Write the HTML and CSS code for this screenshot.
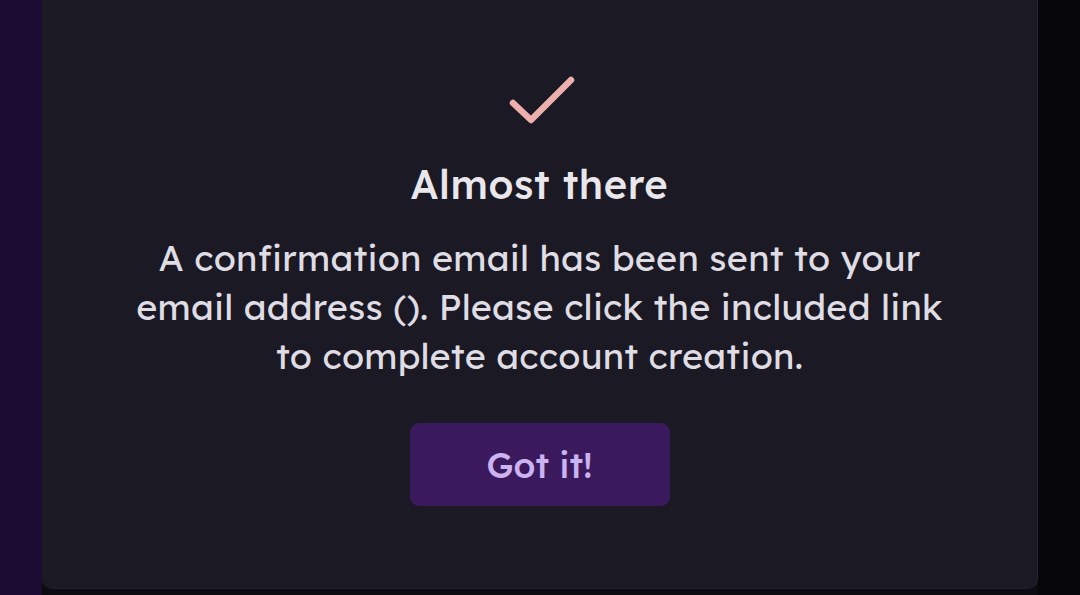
FILE: index.html
```html
<!DOCTYPE html>
<html lang="en">
<head>
<meta charset="utf-8">
<title>Almost there</title>
<link rel="stylesheet" href="styles.css">
</head>
<body>
<div class="page">
  <aside class="rail"></aside>
  <main class="main">
    <section class="card">
      <svg class="check" width="70" height="52" viewBox="0 0 70 52" aria-hidden="true">
        <path d="M5 28 L23 45 L63 5" fill="none" stroke="#eeb0ad" stroke-width="6.5" stroke-linecap="round" stroke-linejoin="round"/>
      </svg>
      <h1 class="title">Almost there</h1>
      <p class="text">A confirmation email has been sent to your email address (). Please click the included link to complete account creation.</p>
      <button class="btn" type="button">Got it!</button>
    </section>
  </main>
  <div class="edge"></div>
</div>
</body>
</html>
```
FILE: styles.css
```css
html, body {
  margin: 0;
  padding: 0;
  height: 100%;
}
body {
  background: #07070b;
  font-family: "Lexend", "Open Sans", "Noto Sans", sans-serif;
  overflow: hidden;
}
.page {
  display: flex;
  height: 595px;
}
.rail {
  width: 42px;
  flex: none;
  background: #1c0b32;
}
.main {
  flex: 1;
  display: flex;
  flex-direction: column;
  background: #0c0b11;
  padding-bottom: 6px;
}
.edge {
  width: 42px;
  flex: none;
  background: #07070b;
}
.card {
  flex: 1;
  background: #1a1924;
  border-right: 1px solid #25242f;
  border-bottom: 1px solid #201f2a;
  border-radius: 0 0 10px 10px;
  display: flex;
  flex-direction: column;
  align-items: center;
  padding-top: 75px;
  box-sizing: border-box;
}
.check {
  display: block;
  margin-left: 6px;
}
.title {
  margin: 0;
  margin-top: 32px;
  font-size: 40px;
  font-weight: 500;
  line-height: 50px;
  letter-spacing: 0.6px;
  color: #e9e7ec;
}
.text {
  margin: 24px 0 0;
  width: 830px;
  text-align: center;
  font-size: 36px;
  line-height: 49px;
  letter-spacing: 0.22px;
  color: #dfdce3;
}
.btn {
  margin-top: 43px;
  width: 260px;
  height: 83px;
  border: none;
  border-radius: 9px;
  background: #3a1a5d;
  color: #cbb3f1;
  font-family: inherit;
  font-size: 35px;
  font-weight: 500;
}
```
